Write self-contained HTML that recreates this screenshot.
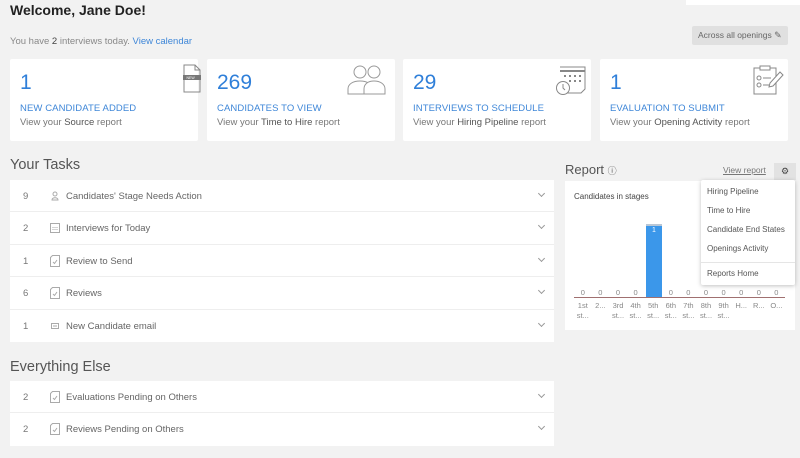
<!DOCTYPE html>
<html><head><style>
*{box-sizing:border-box;margin:0;padding:0}
body{width:800px;height:458px;background:#f2f2f2;font-family:"Liberation Sans",sans-serif;position:relative;overflow:hidden;color:#555}
.a{position:absolute}
.card{position:absolute;top:59px;width:188px;height:82px;background:#fff;border-radius:2px}
.card .n{position:absolute;left:10px;top:12px;font-size:21px;color:#2f7fd9}
.card .t{position:absolute;left:10px;top:44px;font-size:9.5px;color:#3f87d8;letter-spacing:.1px}
.card .s{position:absolute;left:10px;top:58px;font-size:9.5px;color:#777}
.card .s b{font-weight:normal;color:#555}
.card svg{position:absolute}
h2{position:absolute;font-weight:normal;font-size:14.5px;color:#555}
.panel{position:absolute;left:10px;width:544px;background:#fff}
.row{height:32.4px;border-bottom:1px solid #eee;position:relative;font-size:9.5px;color:#666}
.row:last-child{border-bottom:none}
.row .c{position:absolute;left:13px;top:11px;color:#777}
.row .i{position:absolute;left:40px;top:10px;width:10px;height:12px}
.row .l{position:absolute;left:56px;top:11px}
.row .v{position:absolute;right:10px;top:11px;width:5px;height:5px;border-right:1px solid #999;border-bottom:1px solid #999;transform:rotate(45deg)}
.col{position:absolute;width:17.6px;text-align:center;font-size:7.5px;color:#888;line-height:10px}
.dd div{font-size:8px;color:#555;padding-left:6px;height:19px;line-height:19px}
</style></head><body>
<div class="a" style="left:686px;top:0;width:114px;height:5px;background:#fff"></div>
<div class="a" style="left:10px;top:2px;font-size:14px;font-weight:bold;color:#222">Welcome, Jane Doe!</div>
<div class="a" style="left:10px;top:36px;font-size:9.5px;color:#888">You have <b style="font-weight:normal;color:#444">2</b> interviews today. <span style="color:#3f87d8">View calendar</span></div>
<div class="a" style="left:692px;top:26px;width:96px;height:19px;background:#e0e0e0;border-radius:2px;font-size:8.5px;color:#666;line-height:19px;padding-left:6px">Across all openings <span style="font-size:9px">✎</span></div>

<div class="card" style="left:10px"><div class="n">1</div><div class="t">NEW CANDIDATE ADDED</div><div class="s">View your <b>Source</b> report</div>
<svg style="left:162px;top:5px" width="30" height="30" viewBox="0 0 30 30"><path d="M12 1h11l5 5v22H12z" fill="none" stroke="#888" stroke-width="1"/><path d="M23 1v5h5" fill="none" stroke="#888"/><rect x="11" y="11" width="18" height="5" fill="#777"/><text x="14.5" y="15" font-size="3.5" fill="#fff" font-family="Liberation Sans">NEW</text></svg></div>
<div class="card" style="left:207px"><div class="n">269</div><div class="t">CANDIDATES TO VIEW</div><div class="s">View your <b>Time to Hire</b> report</div>
<svg style="left:140px;top:4px" width="42" height="32" viewBox="0 0 42 32"><circle cx="13" cy="9" r="6" fill="none" stroke="#999"/><path d="M1 31v-5c0-5 5-8 12-8s12 3 12 8v5z" fill="#fff" stroke="#999"/><circle cx="27" cy="9" r="6" fill="#fff" stroke="#999"/><path d="M17 31v-5c0-5 4-8 10-8s11 3 11 8v5z" fill="#fff" stroke="#999"/></svg></div>
<div class="card" style="left:403px"><div class="n">29</div><div class="t">INTERVIEWS TO SCHEDULE</div><div class="s">View your <b>Hiring Pipeline</b> report</div>
<svg style="left:152px;top:5px" width="32" height="32" viewBox="0 0 32 32"><path d="M5 3h25v22l-4 4H10" fill="none" stroke="#888"/><path d="M5 7h25" stroke="#888" stroke-width="2"/><g fill="#888"><rect x="9" y="11" width="2" height="2"/><rect x="14" y="11" width="2" height="2"/><rect x="19" y="11" width="2" height="2"/><rect x="24" y="11" width="2" height="2"/><rect x="14" y="16" width="2" height="2"/><rect x="19" y="16" width="2" height="2"/><rect x="24" y="16" width="2" height="2"/></g><circle cx="8" cy="24" r="6.5" fill="#fff" stroke="#888"/><path d="M8 20v4l2 2" fill="none" stroke="#888"/></svg></div>
<div class="card" style="left:600px"><div class="n">1</div><div class="t">EVALUATION TO SUBMIT</div><div class="s">View your <b>Opening Activity</b> report</div>
<svg style="left:152px;top:5px" width="32" height="32" viewBox="0 0 32 32"><rect x="2" y="4" width="22" height="26" fill="none" stroke="#888"/><rect x="8" y="2" width="10" height="4" fill="#fff" stroke="#888"/><circle cx="7" cy="14" r="2" fill="none" stroke="#888"/><circle cx="7" cy="21" r="2" fill="none" stroke="#888"/><path d="M11 14h8M11 21h6" stroke="#888"/><path d="M28 8l3 3-10 11-4 1 1-4z" fill="#fff" stroke="#888"/></svg></div>

<h2 style="left:10px;top:157px">Your Tasks</h2>
<div class="panel" style="top:180px">
<div class="row"><span class="c">9</span><svg class="i" viewBox="0 0 10 12"><circle cx="5" cy="4" r="2" fill="none" stroke="#aaa"/><path d="M2 10c0-3 6-3 6 0z" fill="none" stroke="#aaa"/></svg><span class="l">Candidates' Stage Needs Action</span><i class="v"></i></div>
<div class="row"><span class="c">2</span><svg class="i" viewBox="0 0 10 12"><rect x=".5" y="1.5" width="9" height="9" fill="none" stroke="#aaa"/><path d="M3 5v4M5 5v4M7 5v4" stroke="#aaa" stroke-dasharray="1 1"/></svg><span class="l">Interviews for Today</span><i class="v"></i></div>
<div class="row"><span class="c">1</span><svg class="i" viewBox="0 0 10 12"><path d="M.5 2.5l2-2h7v11H.5z" fill="none" stroke="#aaa"/><path d="M3 7l1.5 1.5L7 5" fill="none" stroke="#aaa"/></svg><span class="l">Review to Send</span><i class="v"></i></div>
<div class="row"><span class="c">6</span><svg class="i" viewBox="0 0 10 12"><path d="M.5 2.5l2-2h7v11H.5z" fill="none" stroke="#aaa"/><path d="M3 7l1.5 1.5L7 5" fill="none" stroke="#aaa"/></svg><span class="l">Reviews</span><i class="v"></i></div>
<div class="row"><span class="c">1</span><svg class="i" viewBox="0 0 10 12"><rect x="1.5" y="3.5" width="7" height="5" fill="none" stroke="#aaa"/><path d="M3 6h4" stroke="#aaa"/></svg><span class="l">New Candidate email</span><i class="v"></i></div>
</div>

<h2 style="left:10px;top:359px">Everything Else</h2>
<div class="panel" style="top:381px">
<div class="row"><span class="c">2</span><svg class="i" viewBox="0 0 10 12"><path d="M.5 2.5l2-2h7v11H.5z" fill="none" stroke="#aaa"/><path d="M3 7l1.5 1.5L7 5" fill="none" stroke="#aaa"/></svg><span class="l">Evaluations Pending on Others</span><i class="v"></i></div>
<div class="row"><span class="c">2</span><svg class="i" viewBox="0 0 10 12"><path d="M.5 2.5l2-2h7v11H.5z" fill="none" stroke="#aaa"/><path d="M3 7l1.5 1.5L7 5" fill="none" stroke="#aaa"/></svg><span class="l">Reviews Pending on Others</span><i class="v"></i></div>
</div>

<h2 style="left:565px;top:162px;font-size:13px">Report <span style="font-size:9px">ⓘ</span></h2>
<div class="a" style="left:723px;top:165px;font-size:8.5px;color:#777;text-decoration:underline">View report</div>
<div class="a" style="left:774px;top:163px;width:22px;height:17px;background:#e2e2e2;font-size:9px;text-align:center;line-height:17px;color:#444">⚙</div>
<div class="a" style="left:565px;top:181px;width:230px;height:149px;background:#fff"></div>
<div class="a" style="left:574px;top:192px;font-size:8px;color:#444">Candidates in stages</div>
<div class="a" style="left:646px;top:224px;width:16px;height:74px;background:#3b97ea;border-top:2px solid #b9c7d6"></div>
<div class="a" style="left:652px;top:227px;font-size:7px;color:#fff">1</div>
<div class="a" style="left:574px;top:297px;width:211px;height:1px;background:#a07070"></div>
<div class="col" style="left:574px;top:288px">0</div><div class="col" style="left:591.6px;top:288px">0</div><div class="col" style="left:609.2px;top:288px">0</div><div class="col" style="left:626.8px;top:288px">0</div>
<div class="col" style="left:662px;top:288px">0</div><div class="col" style="left:679.6px;top:288px">0</div><div class="col" style="left:697.2px;top:288px">0</div><div class="col" style="left:714.8px;top:288px">0</div><div class="col" style="left:732.4px;top:288px">0</div><div class="col" style="left:750px;top:288px">0</div><div class="col" style="left:767.6px;top:288px">0</div>
<div class="col" style="left:574px;top:301px">1st<br>st...</div><div class="col" style="left:591.6px;top:301px">2...</div><div class="col" style="left:609.2px;top:301px">3rd<br>st...</div><div class="col" style="left:626.8px;top:301px">4th<br>st...</div><div class="col" style="left:644.4px;top:301px">5th<br>st...</div><div class="col" style="left:662px;top:301px">6th<br>st...</div><div class="col" style="left:679.6px;top:301px">7th<br>st...</div><div class="col" style="left:697.2px;top:301px">8th<br>st...</div><div class="col" style="left:714.8px;top:301px">9th<br>st...</div><div class="col" style="left:732.4px;top:301px">H...</div><div class="col" style="left:750px;top:301px">R...</div><div class="col" style="left:767.6px;top:301px">O...</div>

<div class="a dd" style="left:701px;top:180px;width:94px;height:105px;background:#fff;box-shadow:0 1px 4px rgba(0,0,0,.25);padding-top:2px;border-radius:2px">
<div>Hiring Pipeline</div><div>Time to Hire</div><div>Candidate End States</div><div>Openings Activity</div>
<div style="border-top:1px solid #e5e5e5;margin-top:4px;height:22px;line-height:22px">Reports Home</div>
</div>
</body></html>
